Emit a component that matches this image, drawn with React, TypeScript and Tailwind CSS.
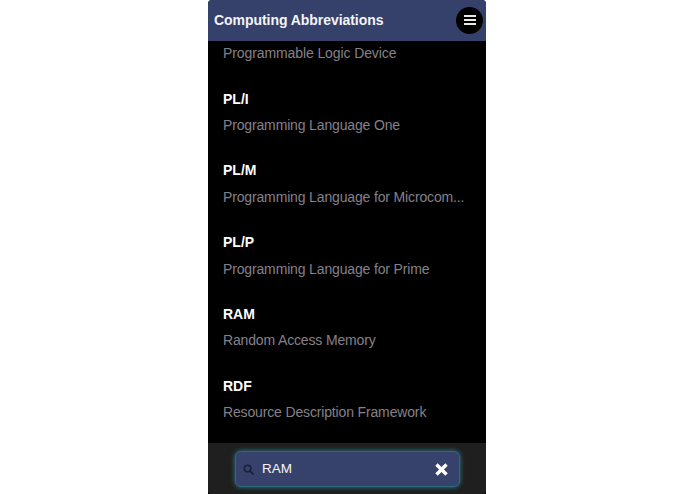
import React from "react";

const items = [
  ["PL/I", "Programming Language One"],
  ["PL/M", "Programming Language for Microcom..."],
  ["PL/P", "Programming Language for Prime"],
  ["RAM", "Random Access Memory"],
  ["RDF", "Resource Description Framework"],
];

export default function App() {
  return (
    <div className="h-[494px] w-[695px] bg-white flex justify-center font-['Liberation_Sans',Arial,sans-serif]">
      <div className="w-[278px] h-[494px] ml-[-1px] bg-black flex flex-col overflow-hidden rounded-t-[4px]">
        <header className="h-[41px] shrink-0 bg-[#35406b] flex items-center justify-between pl-[6px] pr-[3px] pb-[1px]">
          <h1 className="text-[14px] font-bold text-[#f4f4f6] leading-none tracking-[-0.05px]">Computing Abbreviations</h1>
          <button className="w-[27px] h-[27px] rounded-full bg-black flex flex-col items-center justify-center gap-[2px]">
            <span className="block w-[12px] h-[2px] bg-[#e8e8e8]" />
            <span className="block w-[12px] h-[2px] bg-[#e8e8e8]" />
            <span className="block w-[12px] h-[2px] bg-[#e8e8e8]" />
          </button>
        </header>
        <main className="flex-1 min-h-0 flex flex-col pl-[15px] pr-[20px]">
          <p className="mt-[3px] h-[18px] leading-[18px] text-[14px] tracking-[-0.1px] text-[#85818a]">Programmable Logic Device</p>
          <div className="flex flex-col mt-[27.6px] gap-[27.4px]">
            {items.map(([a, b]) => (
              <div key={a} className="flex flex-col gap-[8.4px]">
                <h2 className="h-[18px] leading-[18px] text-[14px] font-bold text-white">{a}</h2>
                <p className="h-[18px] leading-[18px] text-[14px] tracking-[-0.15px] text-[#85818a] whitespace-nowrap">{b}</p>
              </div>
            ))}
          </div>
        </main>
        <footer className="h-[51px] shrink-0 bg-[#1f1f1f] flex items-center justify-center rounded-b-[3px] pt-[1px]">
          <div className="w-[225px] h-[36px] ml-[1px] rounded-[6px] bg-[#36416c] border border-[#2b6a7c] shadow-[0_0_5px_#2a8090] flex items-center pl-[7px] pr-[11px]">
            <svg width="11" height="11" viewBox="0 0 12 12" fill="none" stroke="#1b2036" strokeWidth="1.7" strokeLinecap="round">
              <circle cx="5" cy="5" r="3.6" />
              <path d="M7.8 7.8 L11 11" />
            </svg>
            <span className="ml-[8px] text-[13.5px] text-[#f4f4f6] flex-1">RAM</span>
            <svg width="13" height="13" viewBox="0 0 13 13" stroke="#ffffff" strokeWidth="3.4" strokeLinecap="butt">
              <path d="M1.5 1.5 L11.5 11.5 M11.5 1.5 L1.5 11.5" />
            </svg>
          </div>
        </footer>
      </div>
    </div>
  );
}
